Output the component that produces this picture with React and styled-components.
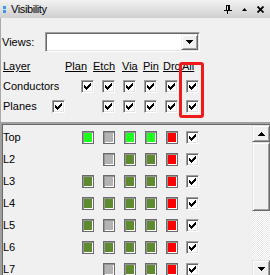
import React from 'react';
import styled, { createGlobalStyle } from 'styled-components';

const GlobalStyle = createGlobalStyle`
  html, body {
    margin: 0;
    padding: 0;
    background: #f0f0f0;
    overflow: hidden;
  }
  body {
    font-family: "Liberation Sans", Arial, sans-serif;
    font-size: 11px;
    color: #000;
  }
`;

const Panel = styled.div`
  width: 270px;
  height: 275px;
  display: flex;
  flex-direction: column;
  background: #f0f0f0;
  overflow: hidden;
`;

const TitleBar = styled.div`
  height: 18px;
  flex: none;
  display: flex;
  align-items: center;
  padding: 0 6px 0 3px;
  background: linear-gradient(#f2f2f2, #cfcfcf);
`;

const Grip = styled.div`
  display: flex;
  flex-direction: column;
  gap: 1px;
  margin-right: 5px;

  span {
    width: 3px;
    height: 3px;
    background: #3f95ee;
  }
`;

const Title = styled.span`
  flex: 1;
  font-size: 11px;
  letter-spacing: -0.4px;
`;

const TitleButtons = styled.div`
  display: flex;
  align-items: center;
  gap: 10px;
`;

const Body = styled.div`
  flex: 1;
  display: flex;
  flex-direction: column;
  box-shadow: inset 1px 0 0 #a9a9a9;
`;

const ViewsRow = styled.div`
  display: flex;
  align-items: center;
  height: 20px;
  margin-top: 14px;
  padding-left: 2px;
`;

const ViewsLabel = styled.span`
  width: 43px;
`;

const Combo = styled.div`
  width: 155px;
  height: 20px;
  box-sizing: border-box;
  display: flex;
  justify-content: flex-end;
  background: #fff;
  border: 1px solid;
  border-color: #a0a0a0 #fff #fff #a0a0a0;
  box-shadow: inset 1px 1px 0 #696969, inset -1px -1px 0 #e3e3e3;
  padding: 1px;
`;

const DropButton = styled.div`
  width: 17px;
  box-sizing: border-box;
  display: flex;
  align-items: center;
  justify-content: center;
  background: #f0f0f0;
  border: 1px solid;
  border-color: #f0f0f0 #696969 #696969 #f0f0f0;
  box-shadow: inset 1px 1px 0 #fff, inset -1px -1px 0 #a0a0a0;
`;

const Settings = styled.div`
  position: relative;
  margin-top: 4px;
`;

const HeaderRow = styled.div`
  display: grid;
  grid-template-columns: 62px 28px 29px 21px 20px 19px auto;
  height: 20px;
  align-items: center;
  padding-left: 3px;

  span {
    text-decoration: underline;
    white-space: nowrap;
  }
`;

const CheckRow = styled.div`
  display: grid;
  grid-template-columns: 81px repeat(5, 21px) auto;
  height: 20px;
  align-items: center;
`;

const RowLabel = styled.div`
  display: flex;
  align-items: center;
  padding-left: 3px;
`;

const LabelText = styled.span`
  width: ${p => p.$width || 'auto'};
`;

const Highlight = styled.div`
  position: absolute;
  left: 179px;
  top: 6px;
  width: 25px;
  height: 56px;
  box-sizing: border-box;
  border: 3px solid #f01a1a;
  border-radius: 3px;
  pointer-events: none;
`;

const Box = styled.div`
  width: 13px;
  height: 13px;
  box-sizing: border-box;
  background: #fff;
  border: 1px solid;
  border-color: #a0a0a0 #fff #fff #a0a0a0;
  box-shadow: inset 1px 1px 0 #696969, inset -1px -1px 0 #e3e3e3;
  display: flex;
  align-items: center;
  justify-content: center;
`;

const List = styled.div`
  margin-top: 6px;
  height: 153px;
  display: flex;
  border-top: 2px solid;
  border-left: 2px solid;
  border-color: #a0a0a0;
  box-shadow: inset 1px 1px 0 #696969;
  overflow: hidden;
`;

const Rows = styled.div`
  flex: 1;
  padding-top: 2px;
`;

const LayerRow = styled.div`
  display: grid;
  grid-template-columns: 79px repeat(4, 21px) 20px auto;
  height: 22px;
  align-items: center;
  padding-left: 1px;
`;

const Swatch = styled.div`
  width: 12px;
  height: 13px;
  box-sizing: border-box;
  background: ${p => p.$color};
  border: 1px solid #6b6b6b;
  box-shadow: inset 1px 1px 0 #959595, inset -1px -1px 0 #fff;
`;

const ScrollBar = styled.div`
  width: 18px;
  display: flex;
  flex-direction: column;
  padding-top: 1px;
`;

const ScrollButton = styled.div`
  height: 17px;
  flex: none;
  box-sizing: border-box;
  display: flex;
  align-items: center;
  justify-content: center;
  background: #f0f0f0;
  border: 1px solid;
  border-color: #e3e3e3 #696969 #696969 #e3e3e3;
  box-shadow: inset 1px 1px 0 #fff, inset -1px -1px 0 #a0a0a0;
`;

const Thumb = styled.div`
  height: 69px;
  flex: none;
  box-sizing: border-box;
  background: #f0f0f0;
  border: 1px solid;
  border-color: #e3e3e3 #696969 #696969 #e3e3e3;
  box-shadow: inset 1px 1px 0 #fff, inset -1px -1px 0 #a0a0a0;
`;

const Track = styled.div`
  flex: 1;
  background: repeating-conic-gradient(#ffffff 0 25%, #e6e6e6 0 50%) 0 0 / 2px 2px;
`;

const CHECK_TOPS = [2, 3, 4, 3, 2, 1, 0];

const Check = () => (
  <Box>
    <svg width="7" height="7" viewBox="0 0 7 7" shapeRendering="crispEdges">
      {CHECK_TOPS.map((y, x) => (
        <rect key={x} x={x} y={y} width="1" height="3" fill="#000" />
      ))}
    </svg>
  </Box>
);

const Arrow = ({ down }) => (
  <svg width="7" height="4" viewBox="0 0 7 4" shapeRendering="crispEdges">
    <path d={down ? 'M0 0h7L3.5 4z' : 'M3.5 0L7 4H0z'} fill="#000" />
  </svg>
);

const PinIcon = () => (
  <svg width="8" height="9" viewBox="0 0 8 9" shapeRendering="crispEdges">
    <rect x="2" y="0.5" width="3" height="5" fill="none" stroke="#000" />
    <rect x="4" y="1" width="1" height="4" fill="#000" />
    <rect x="0" y="5" width="8" height="1" fill="#000" />
    <rect x="3" y="6" width="1" height="3" fill="#000" />
  </svg>
);

const CloseIcon = () => (
  <svg width="7" height="7" viewBox="0 0 7 7">
    <path d="M0.5 0.5L6.5 6.5M6.5 0.5L0.5 6.5" stroke="#000" strokeWidth="1.8" />
  </svg>
);

const GREEN = '#1fff1f';
const GRAY = '#b3b3b3';
const OLIVE = '#5e8b30';
const RED = '#ff0000';

const layers = [
  { name: 'Top', colors: [GREEN, GRAY, GREEN, GREEN, RED] },
  { name: 'L2', colors: [null, GRAY, OLIVE, OLIVE, RED] },
  { name: 'L3', colors: [OLIVE, GRAY, OLIVE, OLIVE, RED] },
  { name: 'L4', colors: [OLIVE, OLIVE, OLIVE, OLIVE, RED] },
  { name: 'L5', colors: [OLIVE, GRAY, OLIVE, OLIVE, RED] },
  { name: 'L6', colors: [OLIVE, OLIVE, OLIVE, OLIVE, RED] },
  { name: 'L7', colors: [null, GRAY, OLIVE, OLIVE, RED] },
];

const headers = ['Layer', 'Plan', 'Etch', 'Via', 'Pin', 'Drc', 'All'];

const App = () => {
  return (
    <Panel>
      <GlobalStyle />
      <TitleBar>
        <Grip><span /><span /></Grip>
        <Title>Visibility</Title>
        <TitleButtons>
          <PinIcon />
          <svg width="5" height="3" viewBox="0 0 5 3"><path d="M2.5 0L5 3H0z" fill="#000" /></svg>
          <CloseIcon />
        </TitleButtons>
      </TitleBar>
      <Body>
        <ViewsRow>
          <ViewsLabel>Views:</ViewsLabel>
          <Combo>
            <DropButton><Arrow down /></DropButton>
          </Combo>
        </ViewsRow>
        <Settings>
          <HeaderRow>
            {headers.map(h => <span key={h}>{h}</span>)}
          </HeaderRow>
          <CheckRow>
            <RowLabel>Conductors</RowLabel>
            <Check /><Check /><Check /><Check /><Check /><Check />
          </CheckRow>
          <CheckRow>
            <RowLabel>
              <LabelText $width="49px">Planes</LabelText>
              <Check />
            </RowLabel>
            <span />
            <Check /><Check /><Check /><Check /><Check />
          </CheckRow>
          <Highlight />
        </Settings>
        <List>
          <Rows>
            {layers.map(layer => (
              <LayerRow key={layer.name}>
                <span>{layer.name}</span>
                {layer.colors.map((c, i) =>
                  c ? <Swatch key={i} $color={c} /> : <span key={i} />
                )}
                <Check />
              </LayerRow>
            ))}
          </Rows>
          <ScrollBar>
            <ScrollButton><Arrow /></ScrollButton>
            <Thumb />
            <Track />
            <ScrollButton><Arrow down /></ScrollButton>
          </ScrollBar>
        </List>
      </Body>
    </Panel>
  );
};

export default App;
